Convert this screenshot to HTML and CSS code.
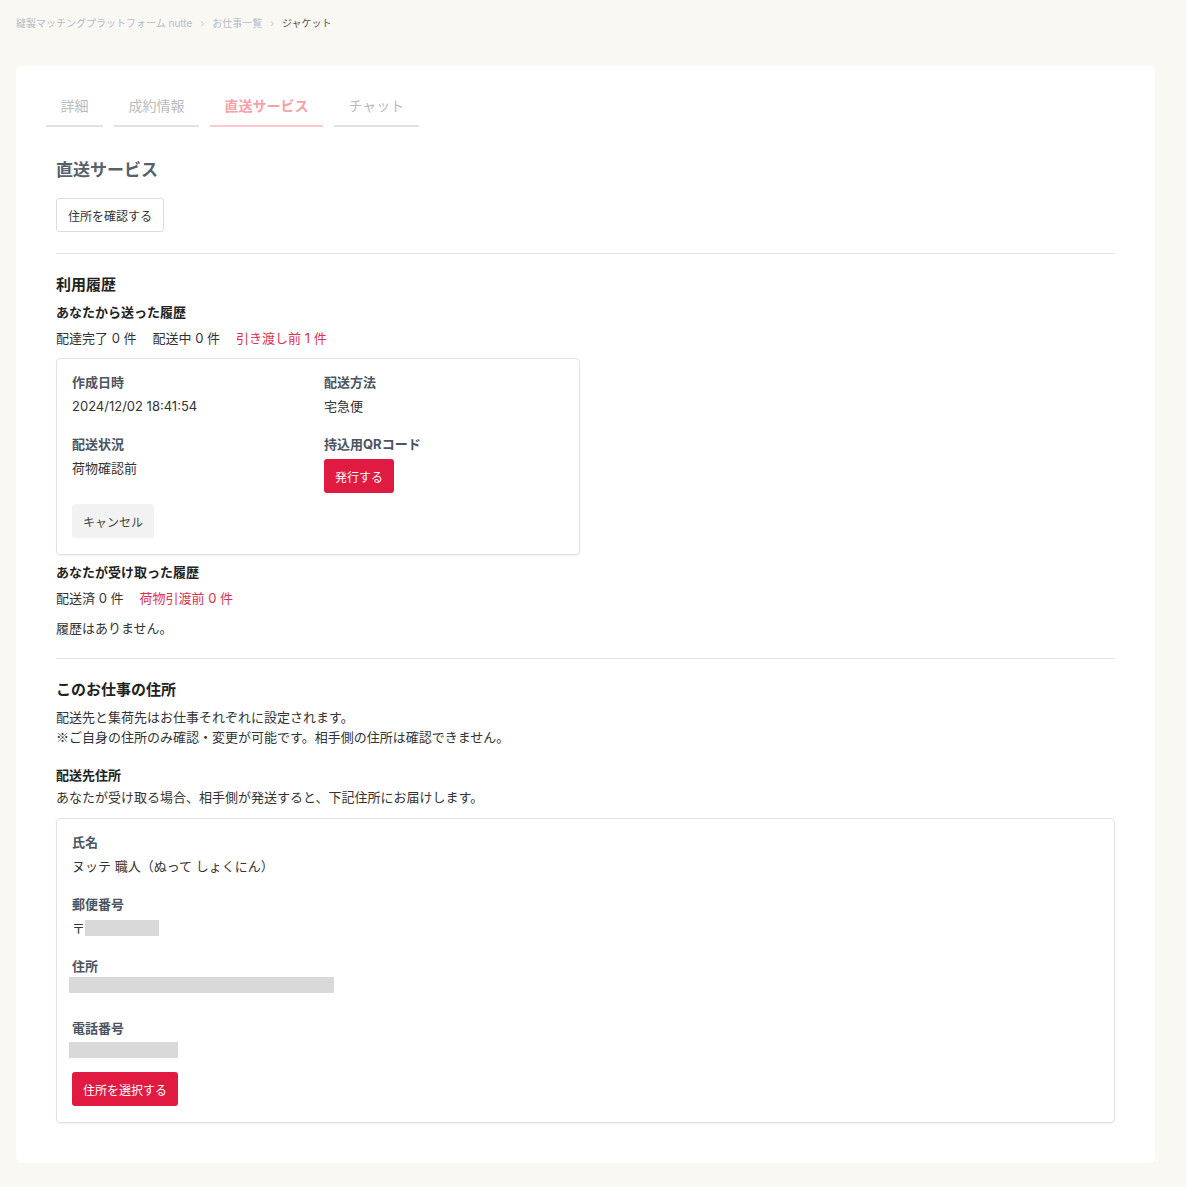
FILE: index.html
```html
<!DOCTYPE html>
<html lang="ja">
<head>
  <meta charset="UTF-8">
  <title>直送サービス | nutte</title>
  <link rel="stylesheet" href="styles.css">
</head>
<body>
  <div class="breadcrumb">
    <a href="#">縫製マッチングプラットフォーム nutte</a>
    <span class="sep">›</span>
    <a href="#">お仕事一覧</a>
    <span class="sep">›</span>
    <span class="current">ジャケット</span>
  </div>

  <div class="panel">
    <div class="tabs">
      <a class="tab" href="#">詳細</a>
      <a class="tab" href="#">成約情報</a>
      <a class="tab active" href="#">直送サービス</a>
      <a class="tab" href="#">チャット</a>
    </div>

    <h1 class="page-title">直送サービス</h1>
    <button class="btn btn-outline">住所を確認する</button>

    <hr>

    <h2 class="section-title">利用履歴</h2>
    <h3 class="sub-title">あなたから送った履歴</h3>
    <div class="counts">
      <span>配達完了 0 件</span>
      <span>配送中 0 件</span>
      <span class="alert">引き渡し前 1 件</span>
    </div>

    <div class="card card-small">
      <div class="grid">
        <div class="field">
          <div class="label">作成日時</div>
          <div class="value">2024/12/02 18:41:54</div>
        </div>
        <div class="field">
          <div class="label">配送方法</div>
          <div class="value">宅急便</div>
        </div>
        <div class="field">
          <div class="label">配送状況</div>
          <div class="value">荷物確認前</div>
        </div>
        <div class="field">
          <div class="label">持込用QRコード</div>
          <button class="btn btn-red">発行する</button>
        </div>
      </div>
      <button class="btn btn-gray">キャンセル</button>
    </div>

    <h3 class="sub-title received">あなたが受け取った履歴</h3>
    <div class="counts">
      <span>配送済 0 件</span>
      <span class="alert">荷物引渡前 0 件</span>
    </div>
    <p class="empty">履歴はありません。</p>

    <hr>

    <h2 class="section-title">このお仕事の住所</h2>
    <p class="note">配送先と集荷先はお仕事それぞれに設定されます。<br><span class="cjk">※</span>ご自身の住所のみ確認・変更が可能です。相手側の住所は確認できません。</p>

    <h3 class="sub-title addr">配送先住所</h3>
    <p class="addr-desc">あなたが受け取る場合、相手側が発送すると、下記住所にお届けします。</p>

    <div class="card">
      <div class="field">
        <div class="label">氏名</div>
        <div class="value">ヌッテ 職人（ぬって しょくにん）</div>
      </div>
      <div class="field">
        <div class="label">郵便番号</div>
        <div class="value">〒<span class="masked" style="width:74px"></span></div>
      </div>
      <div class="field">
        <div class="label">住所</div>
        <div class="value value-masked"><span class="masked shift" style="width:265px"></span></div>
      </div>
      <div class="field last">
        <div class="label">電話番号</div>
        <div class="value value-masked"><span class="masked shift low" style="width:109px"></span></div>
      </div>
      <button class="btn btn-red">住所を選択する</button>
    </div>
  </div>
</body>
</html>
```

FILE: styles.css
```css
body { margin: 0; background: #f9f8f3; font-family: Inter, "Noto Sans CJK JP", sans-serif; color: #333; font-size: 13px; }
a { text-decoration: none; }
.cjk { font-family: "Noto Sans CJK JP", sans-serif; }

.breadcrumb { padding: 16px 16px 0; height: 66px; box-sizing: border-box; font-size: 10px; line-height: 14px; display: flex; gap: 8px; }
.breadcrumb a { color: #b5bcc7; }
.breadcrumb .sep { color: #c4c8ce; }
.breadcrumb .current { color: #555; }

.panel { background: #fff; margin: 0 32px 25px 16px; border-radius: 6px; padding: 30px 40px 40px; }

.tabs { display: flex; gap: 11px; margin-left: -10px; }
.tab { font-size: 14px; line-height: 20px; padding: 0 14.5px 9px; color: #bbb; border-bottom: 2px solid #e2e2e2; }
.tab.active { color: #f7a0a8; font-weight: bold; border-bottom-color: #fcc9cd; }

.page-title { font-size: 17px; line-height: 24px; color: #56616c; margin: 31px 0 16px; }

.btn { font-family: inherit; font-size: 12px; height: 34px; padding: 0 10px; border-radius: 3px; border: 1px solid transparent; cursor: pointer; }
.btn-outline { background: #fff; border-color: #dcdcdc; color: #333; padding: 0 11px; }
.btn-red { background: #e01a40; color: #fff; }
.btn-gray { background: #f2f2f2; color: #444; }

hr { border: 0; border-top: 1px solid #e2e2e2; margin: 20px 0; }
.btn-outline + hr { margin-top: 21px; }

.section-title { font-size: 15px; line-height: 22px; color: #222; margin: 0 0 6px; }
.sub-title { font-size: 13px; line-height: 20px; color: #222; margin: 0 0 6px; }
.counts { display: flex; gap: 16px; line-height: 20px; margin-bottom: 10px; }
.counts .alert { color: #e12f4e; }

.card { border: 1px solid #e2e2e6; border-radius: 4px; box-shadow: 0 1px 2px rgba(0, 0, 0, 0.06); padding: 13px 15px 16px; }
.card-small { width: 492px; }
.grid { display: grid; grid-template-columns: 1fr 1fr; column-gap: 12px; }

.field { margin-bottom: 18px; }
.field.last { margin-bottom: 10px; }
.label { font-weight: bold; color: #4b5462; line-height: 20px; margin-bottom: 4px; }
.value { line-height: 20px; color: #333; }
.grid .btn-red { margin-top: 1px; }
.grid .field:nth-child(4) { margin-bottom: 11px; }
.value-masked { height: 20px; display: flex; align-items: flex-start; }
.masked { display: inline-block; vertical-align: middle; height: 16px; background: #d9d9d9; margin-top: -2px; }
.masked.shift { margin-left: -3px; margin-top: -3px; }
.masked.shift.low { margin-top: 0; }

.sub-title.received { margin-top: 7px; }
.empty { margin: 0; line-height: 20px; }
.note { margin: 0; line-height: 20px; }
.sub-title.addr { margin-top: 18px; margin-bottom: 2px; }
.addr-desc { margin: 0 0 11px; line-height: 20px; }
```
